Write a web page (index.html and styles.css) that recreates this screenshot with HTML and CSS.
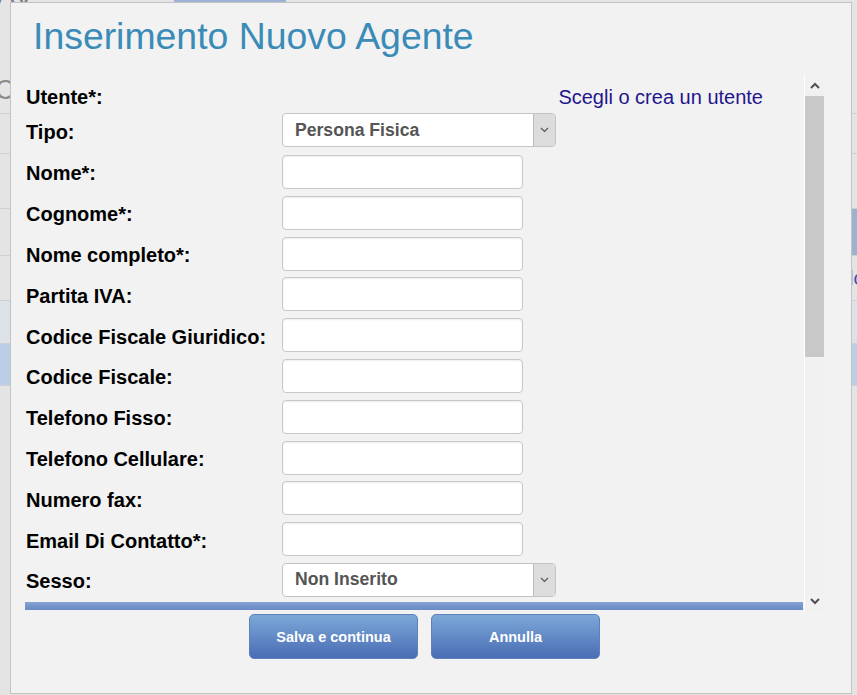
FILE: index.html
```html
<!DOCTYPE html>
<html lang="it">
<head>
<meta charset="utf-8">
<title>Inserimento Nuovo Agente</title>
<link rel="stylesheet" href="styles.css">
</head>
<body>
<div class="page">
  <div class="bg-head">
    <div class="bg-topbar"><span class="bg-av">AV</span><span class="bg-btn">Nuovo Agente</span></div>
    <div class="bg-co">Co</div>
  </div>
  <div class="bg-row r1"></div>
  <div class="bg-row r2"></div>
  <div class="bg-row r3"></div>
  <div class="bg-row r4"><span class="bg-lo">lo</span></div>
  <div class="bg-row r5"></div>
  <div class="bg-row r6"></div>
</div>

<div class="modal">
  <h1 class="title">Inserimento Nuovo Agente</h1>
  <div class="scroll">
    <div class="scroll-content">
      <div class="user-row">
        <span class="label">Utente*:</span>
        <a class="link" href="#">Scegli o crea un utente</a>
      </div>
      <div class="form-grid">
        <label class="label">Tipo:</label>
        <div class="select first"><span class="select-text">Persona Fisica</span><span class="select-arrow"><svg width="9" height="6" viewBox="0 0 9 6"><polyline points="1,1 4.5,4.5 8,1" fill="none" stroke="#555" stroke-width="1.2"/></svg></span></div>
        <label class="label">Nome*:</label><input class="field" type="text">
        <label class="label">Cognome*:</label><input class="field" type="text">
        <label class="label">Nome completo*:</label><input class="field" type="text">
        <label class="label">Partita IVA:</label><input class="field" type="text">
        <label class="label">Codice Fiscale Giuridico:</label><input class="field" type="text">
        <label class="label">Codice Fiscale:</label><input class="field" type="text">
        <label class="label">Telefono Fisso:</label><input class="field" type="text">
        <label class="label">Telefono Cellulare:</label><input class="field" type="text">
        <label class="label">Numero fax:</label><input class="field" type="text">
        <label class="label">Email Di Contatto*:</label><input class="field" type="text">
        <label class="label">Sesso:</label>
        <div class="select"><span class="select-text">Non Inserito</span><span class="select-arrow"><svg width="9" height="6" viewBox="0 0 9 6"><polyline points="1,1 4.5,4.5 8,1" fill="none" stroke="#555" stroke-width="1.2"/></svg></span></div>
      </div>
      <div class="divider"></div>
    </div>
    <div class="scrollbar">
      <div class="sb-btn"><svg width="10" height="7" viewBox="0 0 10 7"><polyline points="1,6 5,2 9,6" fill="none" stroke="#505050" stroke-width="2"/></svg></div>
      <div class="sb-thumb"></div>
      <div class="sb-space"></div>
      <div class="sb-btn"><svg width="10" height="7" viewBox="0 0 10 7"><polyline points="1,1 5,5 9,1" fill="none" stroke="#505050" stroke-width="2"/></svg></div>
    </div>
  </div>
  <div class="actions">
    <button class="btn" type="button">Salva e continua</button>
    <button class="btn" type="button">Annulla</button>
  </div>
</div>
</body>
</html>
```
FILE: styles.css
```css
html, body {
  margin: 0;
  padding: 0;
}
body {
  width: 857px;
  height: 695px;
  overflow: hidden;
  position: relative;
  background: #e4e4e4;
  font-family: "Liberation Sans", Arial, sans-serif;
}

/* background page (dimmed, behind the dialog) */
.page {
  width: 857px;
}
.bg-head {
  height: 113px;
  border-bottom: 1px solid #d0d0d0;
  background: #e5e5e5;
  overflow: hidden;
}
.bg-topbar {
  display: flex;
  height: 40px;
  align-items: flex-start;
}
.bg-av {
  font-size: 30px;
  line-height: 30px;
  margin-top: -19px;
  margin-left: -4px;
  color: #7e7e7e;
}
.bg-btn {
  margin-left: 140px;
  width: 112px;
  height: 26px;
  margin-top: -14px;
  background: #9db3d6;
  color: #eef;
  font-size: 12px;
  overflow: hidden;
}
.bg-co {
  margin-top: 35px;
  margin-left: -5px;
  font-size: 27px;
  line-height: 30px;
  color: #8a8a8a;
}
.bg-row {
  border-bottom: 1px solid #d0d0d0;
  background: #e4e4e4;
}
.r1 { height: 39px; }
.r2 { height: 54px; }
.r3 {
  height: 46px;
  background: linear-gradient(to right, #e4e4e4 0 845px, #9fb2cd 845px);
}
.r4 {
  height: 44px;
  display: flex;
  align-items: center;
}
.bg-lo {
  margin-left: 849px;
  font-size: 20px;
  color: #4d4aa6;
}
.r5 { height: 42px; background: #dde1e8; }
.r6 { height: 41px; background: #bccde6; }

/* dialog */
.modal {
  position: absolute;
  left: 10px;
  top: 2px;
  width: 842px;
  height: 692px;
  box-sizing: border-box;
  border: 1px solid #c3c3c3;
  background: #f2f2f2;
  display: flex;
  flex-direction: column;
}
.title {
  margin: 13px 0 0 22px;
  font-size: 37.4px;
  line-height: 40px;
  font-weight: normal;
  color: #3a8bb7;
}
.scroll {
  margin: 19px 27px 0 14px;
  height: 537px;
  display: flex;
  overflow: hidden;
}
.scroll-content {
  flex: 1;
  overflow: hidden;
  padding-top: 11px;
}
.label {
  padding-left: 1px;
  font-weight: bold;
  font-size: 20px;
  line-height: 23px;
  color: #000;
}
.form-grid .label {
  padding-top: 4px;
}
.user-row {
  display: flex;
  justify-content: space-between;
  align-items: baseline;
  padding-right: 41px;
  margin-bottom: 4px;
}
.link {
  font-size: 20px;
  line-height: 23px;
  color: #1f178c;
  text-decoration: none;
}
.form-grid {
  display: grid;
  grid-template-columns: 257px 1fr;
  row-gap: 6.8px;
  align-items: center;
}
.select {
  box-sizing: border-box;
  width: 274px;
  height: 34px;
  border: 1px solid #c4c4c4;
  border-radius: 4px;
  background: #fff;
  display: flex;
  align-items: center;
  overflow: hidden;
}
.select.first {
  margin-bottom: 1.2px;
}
.select-text {
  padding-left: 12px;
  font-weight: bold;
  font-size: 17.6px;
  color: #555;
}
.select-arrow {
  margin-left: auto;
  align-self: stretch;
  width: 21px;
  background: #dcdcdc;
  border-left: 1px solid #bcbcbc;
  display: flex;
  align-items: center;
  justify-content: center;
}
.field {
  box-sizing: border-box;
  width: 241px;
  height: 34px;
  margin: 0;
  padding: 0 6px;
  border: 1px solid #c8c8c8;
  border-radius: 4px;
  background: #fff;
  box-shadow: inset 0 1px 2px rgba(0, 0, 0, 0.07);
  font-family: inherit;
  font-size: 16px;
}
.divider {
  margin-top: 5px;
  margin-right: 1px;
  height: 8px;
  background: linear-gradient(#88a3d3, #7595cb 50%, #6a8ac4);
}

/* scrollbar */
.scrollbar {
  width: 19px;
  border-left: 1px solid #ffffff;
  background: #f1f1f1;
  display: flex;
  flex-direction: column;
}
.sb-btn {
  height: 21px;
  display: flex;
  align-items: center;
  justify-content: center;
}
.sb-thumb {
  height: 261px;
  background: #c8c8c8;
}
.sb-space {
  flex: 1;
}

/* buttons */
.actions {
  margin: 2px 27px 0 14px;
  display: flex;
  justify-content: center;
  gap: 13px;
}
.btn {
  box-sizing: border-box;
  width: 169px;
  height: 45px;
  border: 1px solid #5f80bb;
  border-radius: 5px;
  background: linear-gradient(#7ca8d8, #4a6db4);
  color: #fff;
  font-family: "Liberation Sans", Arial, sans-serif;
  font-weight: bold;
  font-size: 14.5px;
  padding: 0;
}
```
